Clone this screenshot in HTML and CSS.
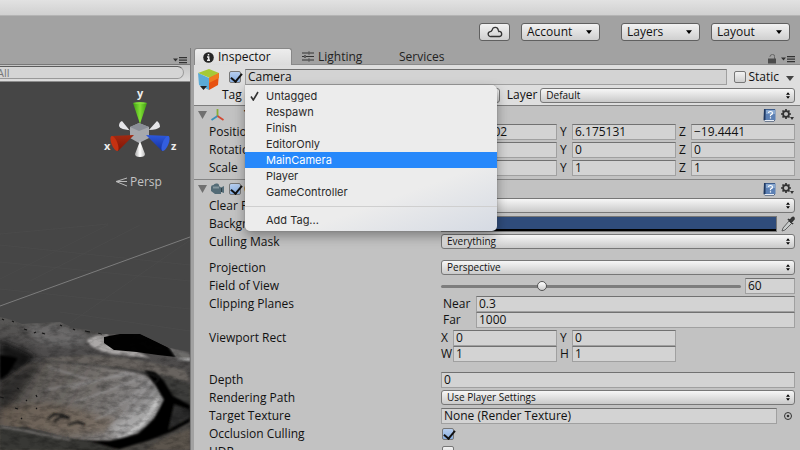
FILE: index.html
```html
<!DOCTYPE html>
<html lang="en">
<head>
<meta charset="utf-8">
<title>Inspector</title>
<link rel="stylesheet" href="styles.css">
</head>
<body>
<svg class="defs" aria-hidden="true">
  <symbol id="updown" viewBox="0 0 5 8"><path d="M2.5 0 5 3H0zM2.5 8 0 5h5z"/></symbol>
  <symbol id="down" viewBox="0 0 8 5"><path d="M0 0h8L4 5z"/></symbol>
  <symbol id="panelmenu" viewBox="0 0 14 7"><path d="M0 1.500h5L2.500 4.500zM6 0h8v1.300H6zM6 2.500h8v1.300H6zM6 5h8v1.300H6z"/></symbol>
  <symbol id="fold" viewBox="0 0 9 8"><path d="M0 0h9L4.500 8z"/></symbol>
  <symbol id="help" viewBox="0 0 13 14">
    <path d="M1 1h11v11l-1 1.500H2L.5 12z" fill="#1f3860"/><path d="M2.500 1.500h10v10.500h-10z" fill="#5c80b4"/><path d="M3 2h9v4H3z" fill="#87a7d0"/><path d="M1.500 12.500h9.500" stroke="#e8edf5"/>
    <path d="M5.500 5q0-1.500 2-1.500t2 1.500-2 2V8.200M7.500 9.200v1.300" fill="none" stroke="#fff" stroke-width="1.200"/>
  </symbol>
  <symbol id="gear" viewBox="0 0 13 12">
    <circle cx="5" cy="5" r="2.900" fill="none" stroke="#333" stroke-width="1.700"/>
    <path d="M5 0v2M5 8v2M0 5h2M8 5h2M1.500 1.500l1.400 1.400M7.100 7.100l1.400 1.400M1.500 8.500l1.400-1.400M7.100 2.900l1.400-1.400" stroke="#333" stroke-width="1.700"/>
    <path d="M9 8h4l-2 3z" fill="#333"/>
  </symbol>
</svg>

<div class="titlebar"></div>
<nav class="toolbar">
  <button class="tool cloud" aria-label="Cloud services"><svg width="16" height="12" viewBox="0 0 16 12"><path d="M4 10.500a2.400 2.400 0 0 1-.8-4.800Q4.500 5.500 5 4.300C6 .5 10.500.4 11.300 4.200l.5 1.300a2.500 2.500 0 0 1 .7 5z" fill="none" stroke="#333" stroke-width="1.300"/></svg></button>
  <button class="tool">Account<svg><use href="#down"/></svg></button>
  <button class="tool layers">Layers<svg><use href="#down"/></svg></button>
  <button class="tool">Layout<svg><use href="#down"/></svg></button>
</nav>

<main class="workspace">
  <section class="scene">
    <div class="scene-tabs"><svg class="panelmenu"><use href="#panelmenu"/></svg></div>
    <div class="searchbar"><input type="text" value="All" aria-label="Search"></div>
    <svg class="view" viewBox="0 82 190 368" preserveAspectRatio="xMidYMid slice">
      <defs>
        <linearGradient id="ground" x1="0" y1="0" x2="0" y2="1"><stop offset="0" stop-color="#5b5a58"/><stop offset=".3" stop-color="#4e4c4c"/><stop offset="1" stop-color="#4a4743"/></linearGradient>
        <linearGradient id="bowl" x1="0" y1="0" x2="1" y2=".25"><stop offset="0" stop-color="#3a3735"/><stop offset=".3" stop-color="#625e5a"/><stop offset=".65" stop-color="#76726f"/><stop offset=".9" stop-color="#8e8c8c"/><stop offset="1" stop-color="#777"/></linearGradient>
        <linearGradient id="green"><stop offset="0" stop-color="#3f9d12"/><stop offset=".5" stop-color="#80df35"/><stop offset="1" stop-color="#3e9912"/></linearGradient>
        <linearGradient id="red" x1="0" y1="0" x2="0" y2="1"><stop offset="0" stop-color="#a12a12"/><stop offset="1" stop-color="#821404"/></linearGradient>
        <linearGradient id="blue" x1="0" y1="0" x2="0" y2="1"><stop offset="0" stop-color="#2d58dc"/><stop offset="1" stop-color="#14309c"/></linearGradient>
        <linearGradient id="white"><stop offset="0" stop-color="#aaa"/><stop offset=".5" stop-color="#fff"/><stop offset="1" stop-color="#bbb"/></linearGradient>
        <filter id="soft" x="-20%" y="-20%" width="140%" height="140%"><feGaussianBlur stdDeviation="1"/></filter>
        <filter id="soft2" x="-20%" y="-20%" width="140%" height="140%"><feGaussianBlur stdDeviation="3"/></filter>
        <filter id="rock" x="0" y="0" width="100%" height="100%"><feTurbulence type="fractalNoise" baseFrequency=".1 .2" numOctaves="4" seed="8"/><feColorMatrix values="0 0 0 0 0  0 0 0 0 0  0 0 0 0 0  2 0 0 0 -.8"/></filter>
        <clipPath id="land"><path d="M0 317 12 320 22 324 40 323 60 322 73 328 90 330 103 334 120 334 140 334 155 341 170 348 190 352V450H0z"/></clipPath>
        <clipPath id="crater"><path d="M0 384 25 365 45 360 90 364 120 369 145 375 155 384 166 398 160 412 145 430 124 440 85 442 40 430 0 425z"/></clipPath>
      </defs>
      <path d="M0 82h190v368H0z" fill="#464646"/>
      <path d="M0 234 108 224M0 262 190 281M0 289 190 309M30 281 140 225M0 279 108 225M70 323 190 240M0 245 190 265M60 312 190 331" stroke="#4d4d4d" stroke-width=".6"/>
      <path d="M0 306 190 237" stroke="#828282" stroke-width=".9"/>
      <g clip-path="url(#land)">
        <path d="M0 310h190v140H0z" fill="url(#ground)"/>
        <path d="M22 326 58 324 88 336 80 346 40 344z" fill="#6c6b6b" filter="url(#soft2)"/>
        <path d="M0 340 20 348 36 356 26 367 0 382z" fill="#141414" filter="url(#soft2)"/>
        <path d="M0 355 18 358 8 374 0 380z" fill="#000" filter="url(#soft)"/>
        <path d="M40 360Q90 350 148 362L185 370 190 382 150 372z" fill="#67635f" filter="url(#soft)"/>
        <path d="M108 334Q88 336 87 341 92 350 113 354L150 358 132 349 108 344z" fill="#aba8a7" filter="url(#soft)"/>
        <path d="M104 337 120 334 141 334 155 341 171 349 176 357 158 355 137 352 114 350 104 343z" fill="#020202"/>
        <path d="M168 346 190 354V362L176 358z" fill="#6d6c6b" filter="url(#soft)"/>
        <path d="M176 359 190 358V361z" fill="#c2c2c2" filter="url(#soft)"/>
        <path d="M0 384 25 365 45 360 90 364 120 369 145 375 155 384 166 398 160 412 145 430 124 440 85 442 40 430 0 425z" fill="url(#bowl)" filter="url(#soft)"/>
        <g clip-path="url(#crater)">
          <path d="M0 386 25 367 42 362 30 380 8 410 0 412z" fill="#1d1b1a" opacity=".6" filter="url(#soft2)"/>
          <path d="M0 408Q45 397 85 411T123 406L108 432 70 436 0 428z" fill="#736556" opacity=".6" filter="url(#soft2)"/>
          <path d="M160 392Q152 396 138 408T108 428L120 438 146 426 162 408z" fill="#b4b3b3" opacity=".75" filter="url(#soft2)"/>
          <g filter="url(#soft)" fill="none" stroke="#a3a2a4" opacity=".6">
            <path d="M150 384Q128 409 105 434M156 390 118 436M160 397 132 434M151 380Q120 408 95 420M145 377Q105 392 75 402M135 373Q90 382 45 390M48 367 90 380M128 372 72 388" stroke-width="1.500"/>
            <path d="M157 399Q149 426 119 438" stroke="#d8d8d8" stroke-width="4"/>
          </g>
          <path d="M154 386 126 412M158 393 136 416M148 381 112 402M138 376 96 388" stroke="#454342" opacity=".6" filter="url(#soft)"/>
          <path d="M48 419 54 414 63 415 70 418 61 417 54 421M68 425 78 422 85 425" fill="none" stroke="#171615" stroke-width="1.800" filter="url(#soft)"/>
        </g>
        <path d="M150 374 190 384V408L176 402 166 388z" fill="#3d3c3b" filter="url(#soft)"/>
        <path d="M144 370 155 372 164 381 173 396 190 405V422L171 432 150 440 120 449 76 450 72 441 110 441 138 434 154 419 164 400 155 384z" fill="#060606" filter="url(#soft)"/>
        <path d="M174 404 190 410V418L168 430z" fill="#2f2e2d" filter="url(#soft)"/>
        <path d="M30 360Q90 364 130 370T154 383" fill="none" stroke="#333" filter="url(#soft)"/>
        <path d="M0 428 25 427 60 437 90 441 120 450H0z" fill="#393735" filter="url(#soft)"/>
        <path d="M0 427 23 430 39 434 70 440" fill="none" stroke="#898583" stroke-width="1.500" filter="url(#soft)"/>
        <path d="M145 450 165 438 190 429V450z" fill="#5b544d" filter="url(#soft)"/>
        <path d="M0 315h190v135H0z" filter="url(#rock)" opacity=".3"/>
        <path d="M2 319 4 320M12 321 14 322M24 329 27 330M34 333 36 332M42 333 45 334M60 325 62 326M73 329 75 330M85 331 90 332M98 333 102 334M17 388 19 389M36 395 37 397M0 397 4 398M15 408 18 409M36 408 37 409M21 418 22 419M26 400 27 401" stroke="#141414" stroke-width="1.200"/>
      </g>
      <g>
        <path d="M131 132 122 121Q119 122 119 126 120 130 132 130z" fill="#e5e5e8"/>
        <path d="M148 131 157 121Q160 123 160 127 157 130 149 130z" fill="#e5e5e8"/>
        <path d="m130 127 9-4 10 4v11l-10 5-9-5z" fill="#a6a8ad"/><path d="m130 127 9-4 10 4-10 4z" fill="#8a8e97"/>
        <path d="M133 103h14l-7 21z" fill="url(#green)"/><path d="M133 103q7-2 14 0-7 2-14 0" fill="#83df3b"/>
        <path d="m134 135-22 1 6 15z" fill="url(#red)"/><ellipse cx="114.500" cy="143.500" rx="3" ry="8" transform="rotate(-22 114.500 143.500)" fill="#c53111"/>
        <path d="m146 135 23 1-7 15z" fill="url(#blue)"/><ellipse cx="165.500" cy="143.500" rx="3" ry="8" transform="rotate(22 165.500 143.500)" fill="#335ee0"/>
        <path d="m140 141-5 13q0 3 5 3t5-3z" fill="url(#white)"/>
      </g>
      <path d="m127 178-11 3.500 11 4.500M127 181.500h-10" fill="none" stroke="#bbb"/>
      <g class="axis"><text x="137" y="97">y</text><text x="104" y="150">x</text><text x="171" y="150">z</text></g>
      <text class="persp" x="130" y="186">Persp</text>
    </svg>
  </section>

  <section class="inspector">
    <div class="tabs">
      <button class="tab active"><svg width="11" height="11" viewBox="0 0 11 11"><circle cx="5.500" cy="5.500" r="5.300" fill="#252525"/><path d="M5.500 2v1.600M4 5h1.700v3M4 8.300h3" stroke="#eee" stroke-width="1.500" fill="none"/></svg>Inspector</button>
      <button class="tab lighting"><svg width="12" height="11" viewBox="0 0 12 11"><path d="M0 2h6M8 2h4M0 5.500h2M4 5.500h8M0 9h6M8 9h4M7 .5v3M3 4v3M7 7.500v3" stroke="#333" stroke-width="1.200"/></svg>Lighting</button>
      <button class="tab services">Services</button>
      <svg class="lock" viewBox="0 0 8 10"><path d="M2 3V2.500q0-2 2.500-2t2 2V5" fill="none" stroke="#666"/><path d="M0 4.500h8V9.500H0z" fill="#4c4c4c"/></svg>
      <svg class="panelmenu"><use href="#panelmenu"/></svg>
    </div>

    <div class="object">
      <svg class="cube" viewBox="0 0 22 23"><path d="m0 4 11-4 10 4-9 5z" fill="#a6c936"/><path d="m0 4 11 5v12L1 16z" fill="#5baad6"/><path d="m11 9 10-5-1 12-9 5z" fill="#e75212"/><path d="m11 9 10-5v5l-10 5z" fill="#f07b1e"/><path d="M2 17h7l-3.500 4z" fill="#222"/></svg>
      <div class="line">
        <input type="checkbox" checked aria-label="Enabled">
        <input class="field name" type="text" value="Camera" aria-label="Name">
        <label class="static"><input type="checkbox">Static</label>
        <svg class="static-arrow"><use href="#down"/></svg>
      </div>
      <div class="line second">
        <label class="tag" for="tag">Tag</label>
        <span class="popup"><select id="tag"><option>Untagged</option></select><svg><use href="#updown"/></svg></span>
        <label class="layer" for="layer">Layer</label>
        <span class="popup"><select id="layer"><option>Default</option></select><svg><use href="#updown"/></svg></span>
      </div>
      <div class="menu" role="menu">
        <button role="menuitem"><svg width="9" height="10" viewBox="0 0 9 10"><path d="M1 5.500 3.300 9 8 1" fill="none" stroke="#333" stroke-width="1.600"/></svg>Untagged</button>
        <button role="menuitem">Respawn</button>
        <button role="menuitem">Finish</button>
        <button role="menuitem">EditorOnly</button>
        <button role="menuitem" class="selected">MainCamera</button>
        <button role="menuitem">Player</button>
        <button role="menuitem">GameController</button>
        <hr>
        <button role="menuitem">Add Tag...</button>
      </div>
    </div>

    <div class="component">
      <header>
        <svg class="fold"><use href="#fold"/></svg>
        <svg class="kind" viewBox="0 0 16 14"><path d="M7.500 8V1" stroke="#87ae36" stroke-width="1.800"/><path d="m7.500 8-6 4" stroke="#3892ba" stroke-width="1.800"/><path d="m7.500 8 6 4" stroke="#d24932" stroke-width="1.800"/></svg>
        <h2 class="plain">Transform</h2>
        <svg class="help"><use href="#help"/></svg><svg class="gear"><use href="#gear"/></svg>
      </header>
      <div class="row"><span>Position</span><div class="trio"><label>X<input class="field" value="18.22502"></label><label>Y<input class="field" value="6.175131"></label><label>Z<input class="field" value="−19.4441"></label></div></div>
      <div class="row"><span>Rotation</span><div class="trio"><label>X<input class="field" value="0"></label><label>Y<input class="field" value="0"></label><label>Z<input class="field" value="0"></label></div></div>
      <div class="row"><span>Scale</span><div class="trio"><label>X<input class="field" value="1"></label><label>Y<input class="field" value="1"></label><label>Z<input class="field" value="1"></label></div></div>
    </div>

    <div class="component">
      <header>
        <svg class="fold"><use href="#fold"/></svg>
        <svg class="kind" viewBox="0 0 16 14"><path d="M1 5q0-2 2.500-2 1-2 3.500-1.500T9 4l2 1.500L14 4v7l-3-1v2H5L1 9z" fill="#536b76"/><path d="M3 4.500h6v2H3z" fill="#84979e"/><path d="M11 6h1v4h-1z" fill="#304047"/></svg>
        <input type="checkbox" checked aria-label="Camera enabled">
        <h2>Camera</h2>
        <svg class="help"><use href="#help"/></svg><svg class="gear"><use href="#gear"/></svg>
      </header>
      <div class="row"><label for="clear">Clear Flags</label><span class="popup"><select id="clear"><option>Skybox</option></select><svg><use href="#updown"/></svg></span></div>
      <div class="row"><span>Background</span><div class="pair"><button class="swatch" aria-label="Background color"></button><svg class="dropper" viewBox="0 0 14 16"><path d="m2 12 6-7 2.500 2.500L4 14l-3 1z" fill="#c8cccc" stroke="#555" stroke-width=".9"/><path d="m7 3 5 5M8.500 5 11 2q2-1.500 2 1l-3 3.500" stroke="#333" stroke-width="1.700" fill="#444"/></svg></div></div>
      <div class="row gap"><label for="mask">Culling Mask</label><span class="popup"><select id="mask"><option>Everything</option></select><svg><use href="#updown"/></svg></span></div>
      <div class="row"><label for="proj">Projection</label><span class="popup"><select id="proj"><option>Perspective</option></select><svg><use href="#updown"/></svg></span></div>
      <div class="row"><label for="fov">Field of View</label><div class="pair"><input id="fov" type="range" min="1" max="179" value="60"><input class="field number" value="60" aria-label="Field of View value"></div></div>
      <div class="row"><span>Clipping Planes</span><div class="planes"><label>Near<input class="field" value="0.3"></label><label>Far<input class="field" value="1000"></label></div></div>
      <div class="row gap"><span>Viewport Rect</span><div class="trio"><label>X<input class="field" value="0"></label><label>Y<input class="field" value="0"></label><i></i><label>W<input class="field" value="1"></label><label>H<input class="field" value="1"></label></div></div>
      <div class="row"><label for="depth">Depth</label><input id="depth" class="field" value="0"></div>
      <div class="row"><label for="path">Rendering Path</label><span class="popup"><select id="path"><option>Use Player Settings</option></select><svg><use href="#updown"/></svg></span></div>
      <div class="row"><label for="target">Target Texture</label><div class="pair"><input id="target" class="field" value="None (Render Texture)"><svg class="picker" viewBox="0 0 14 16"><circle cx="7" cy="8" r="3.500" fill="none" stroke="#333"/><circle cx="7" cy="8" r="1.300" fill="#333"/></svg></div></div>
      <div class="row"><label for="occ">Occlusion Culling</label><input id="occ" type="checkbox" checked></div>
      <div class="row"><label for="hdr">HDR</label><input id="hdr" type="checkbox"></div>
    </div>
  </section>
</main>
</body>
</html>
```
FILE: styles.css
```css
* { box-sizing: border-box; }
body {
  margin: 0;
  height: 100vh;
  display: flex;
  flex-direction: column;
  overflow: hidden;
  background: #a2a2a2;
  color: #111;
  font: 12px/16px "Open Sans", "Noto Sans", sans-serif;
}
button, input, select { font: inherit; color: inherit; margin: 0; }
svg { flex: none; }
.defs { position: absolute; width: 0; height: 0; }

.titlebar {
  flex: none;
  height: 16px;
  background: linear-gradient(#e2e2e2, #d0d0d0);
  border-bottom: 1px solid #b4b4b4;
}
.toolbar {
  flex: none;
  height: 32px;
  padding: 7px 10px 0 0;
  display: flex;
  justify-content: flex-end;
  align-items: flex-start;
  gap: 11px;
}
.tool {
  width: 79px;
  height: 18px;
  padding: 0 7px 0 5px;
  display: flex;
  align-items: center;
  justify-content: space-between;
  border: 1px solid #606060;
  border-radius: 3px;
  background: linear-gradient(#f2f2f2, #cfcfcf);
}
.tool svg { width: 6px; height: 4px; }
.cloud { width: 31px; padding: 0; justify-content: center; }
.tool.cloud svg { width: 16px; height: 12px; }
.layers { margin-left: 10px; }

.workspace {
  flex: 1;
  min-height: 0;
  display: grid;
  grid-template-columns: minmax(0, 19fr) minmax(0, 61fr);
}
.scene { display: flex; flex-direction: column; min-height: 0; }
.panelmenu { width: 14px; height: 7px; fill: #333; }
.scene-tabs {
  flex: none;
  height: 17px;
  padding: 9px 3px 0 0;
  display: flex;
  justify-content: flex-end;
  border-bottom: 1px solid #777;
}
.searchbar {
  flex: none;
  height: 17px;
  display: flex;
  padding: 1px 6px 2px 0;
  background: linear-gradient(#c4c4c4, #dcdcdc);
  border-bottom: 1px solid #8c8c8c;
}
.searchbar input {
  flex: 1;
  min-width: 0;
  margin-left: -16px;
  padding: 0 12px;
  border: 1px solid #999;
  border-top: 1px solid #5c5c5c;
  border-radius: 8px;
  background: #d5d5d5;
  color: #777;
  font-size: 11px;
}
.view { flex: 1; width: 100%; min-height: 0; display: block; background: #464646; }
.axis { fill: #eee; font-size: 11px; font-weight: 700; }
.persp { fill: #c4c4c4; font-size: 12px; }

.inspector {
  display: flex;
  flex-direction: column;
  min-height: 0;
  overflow: hidden;
  border-left: 1px solid #7c7c7c;
  padding-left: 3px;
  background: #a2a2a2;
}
.tabs {
  flex: none;
  height: 17px;
  display: flex;
  align-items: center;
  padding-right: 5px;
  border-bottom: 1px solid #8a8a8a;
}
.tab {
  height: 17px;
  padding: 1px 8px 0;
  display: flex;
  align-items: center;
  gap: 4px;
  border: 0;
  background: none;
  color: #222;
}
.tab.active {
  width: 98px;
  border: 1px solid #888;
  border-bottom: 0;
  border-radius: 3px 3px 0 0;
  background: linear-gradient(#ededed, #dcdcdc);
  color: #111;
}
.lighting { width: 99px; padding-left: 10px; }
.services { margin-right: auto; }
.lock { width: 8px; height: 10px; margin: 5px 5px 0 0; }
.tabs .panelmenu { margin-top: 7px; }

.field {
  flex: 1;
  width: 100%;
  min-width: 0;
  height: 16px;
  padding: 0 2px;
  border: 1px solid #a0a0a0;
  border-top-color: #717171;
  border-radius: 0;
  background: #d3d3d3;
  outline: 0;
}
input[type="checkbox"] {
  appearance: none;
  flex: none;
  width: 12px;
  height: 12px;
  border: 1px solid #777;
  border-radius: 2px;
  background: linear-gradient(#f2f2f2, #cfcfcf);
  position: relative;
}
input[type="checkbox"]:checked { background: linear-gradient(#b6cdee, #86aee2); }
input[type="checkbox"]:checked::after {
  content: "";
  position: absolute;
  left: 3px;
  top: -1px;
  width: 5px;
  height: 9px;
  border: solid #111;
  border-width: 0 2px 2px 0;
  transform: rotate(40deg);
}
.popup { position: relative; flex: 1; min-width: 0; display: flex; }
.popup select {
  appearance: none;
  width: 100%;
  height: 15px;
  padding: 0 5px;
  border: 1px solid #777;
  border-radius: 3px;
  background: linear-gradient(#f7f7f7, #c9c9c9);
  font-size: 10px;
  line-height: 13px;
}
.popup svg { position: absolute; right: 5px; top: 4px; width: 4px; height: 7px; }

.object {
  flex: none;
  position: relative;
  height: 41px;
  padding: 4px 5px 0 51px;
  background: #dedede;
  border-bottom: 1px solid #7d7d7d;
  z-index: 1;
}
.cube { position: absolute; left: 4px; top: 4px; width: 22px; height: 23px; }
.line { display: flex; align-items: center; }
.line > input[type="checkbox"] { margin-left: -16px; margin-right: 4px; }
.static { display: flex; align-items: center; gap: 2px; margin-left: 7px; }
.static-arrow { width: 8px; height: 5px; margin: 2px 1px 0 7px; fill: #444; }
.second { margin-top: 2px; }
.tag { width: 23px; margin-left: -23px; }
.layer { margin: 0 3px 0 7px; }

.menu {
  position: absolute;
  left: 51px;
  top: 20px;
  width: 252px;
  padding: 3px 0;
  border-radius: 0 5px 5px 5px;
  background: linear-gradient(160deg, #ececec 70%, #d5dae3);
  box-shadow: 0 0 1px #555, 0 5px 12px rgba(0, 0, 0, .35);
  font: 11px/16px Inter, Roboto, sans-serif;
}
.menu button {
  display: block;
  width: 100%;
  height: 16px;
  padding: 0 21px;
  border: 0;
  background: none;
  color: #2a2a2a;
  text-align: left;
}
.menu button svg { float: left; margin: 3px 0 0 -16px; }
.menu .selected { background: #2688fb; color: #fff; }
.menu hr { height: 1px; margin: 6px 0 5px; border: 0; background: #cfcfcf; }

.component {
  flex: none;
  padding: 0 5px 1px 15px;
  background: #c2c2c2;
  border-bottom: 1px solid #858585;
}
.component header {
  display: flex;
  align-items: center;
  height: 18px;
  margin-left: -11px;
  padding-right: 1px;
}
.fold { width: 9px; height: 8px; fill: #707070; }
.kind { width: 16px; height: 14px; margin: 0 3px; }
h2 { flex: 1; margin: 0 0 0 3px; font-size: 12px; line-height: 16px; }
.plain { margin-left: 15px; }
.help { width: 13px; height: 14px; margin-right: 5px; }
.gear { width: 13px; height: 12px; }
.row {
  display: grid;
  grid-template-columns: 232px minmax(0, 1fr);
  margin-bottom: 2px;
  align-items: start;
}
.row.gap { margin-bottom: 10px; }
.row > input[type="checkbox"] { margin: 2px 1px; }
.trio { display: grid; grid-template-columns: repeat(3, 1fr); column-gap: 3px; }
.trio label { display: grid; grid-template-columns: 12px 1fr; }
.planes label { display: grid; grid-template-columns: 33px 1fr; padding-left: 2px; }
.pair { display: flex; gap: 4px; }
.swatch {
  flex: 1;
  height: 16px;
  padding: 0;
  border: 1px solid #777;
  background: linear-gradient(#2f4c7b 12px, #000 12px);
}
.dropper, .picker { width: 14px; height: 16px; }
#fov { appearance: none; flex: 1; min-width: 0; height: 16px; background: none; }
#fov::-webkit-slider-runnable-track { height: 3px; border-radius: 2px; background: #7d7d7d; }
#fov::-webkit-slider-thumb {
  appearance: none;
  width: 10px;
  height: 10px;
  margin-top: -4px;
  border: 1px solid #555;
  border-radius: 50%;
  background: linear-gradient(#fff, #ccc);
}
.number { flex: 0 0 50px; }
```
